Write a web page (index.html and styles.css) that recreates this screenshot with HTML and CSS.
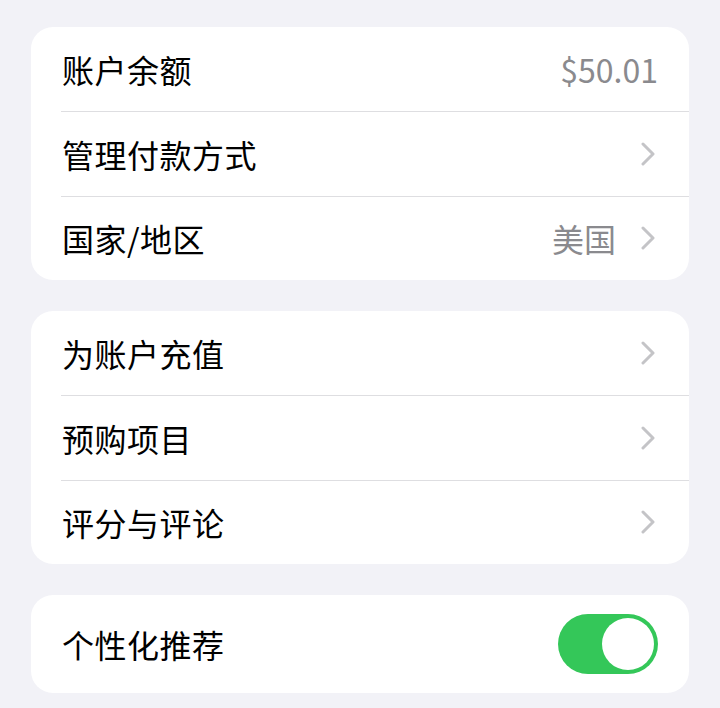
FILE: index.html
```html
<!DOCTYPE html>
<html lang="zh-CN">
<head>
  <meta charset="UTF-8" />
  <meta name="viewport" content="width=device-width, initial-scale=1.0"/>
  <title>账户</title>
  <link rel="stylesheet" href="styles.css">
</head>
<body>
  <div class="group">
    <div class="row">
      <div class="row-body">
        <span class="label">账户余额</span>
        <span class="value">$50.01</span>
      </div>
    </div>
    <div class="row">
      <div class="row-body">
        <span class="label">管理付款方式</span>
        <svg class="chevron" viewBox="0 0 14 24"><path d="M2 2l10 10-10 10"/></svg>
      </div>
    </div>
    <div class="row">
      <div class="row-body">
        <span class="label">国家/地区</span>
        <span class="right">
          <span class="value">美国</span>
          <svg class="chevron" viewBox="0 0 14 24"><path d="M2 2l10 10-10 10"/></svg>
        </span>
      </div>
    </div>
  </div>

  <div class="group">
    <div class="row">
      <div class="row-body">
        <span class="label">为账户充值</span>
        <svg class="chevron" viewBox="0 0 14 24"><path d="M2 2l10 10-10 10"/></svg>
      </div>
    </div>
    <div class="row">
      <div class="row-body">
        <span class="label">预购项目</span>
        <svg class="chevron" viewBox="0 0 14 24"><path d="M2 2l10 10-10 10"/></svg>
      </div>
    </div>
    <div class="row">
      <div class="row-body">
        <span class="label">评分与评论</span>
        <svg class="chevron" viewBox="0 0 14 24"><path d="M2 2l10 10-10 10"/></svg>
      </div>
    </div>
  </div>

  <div class="group">
    <div class="row">
      <div class="row-body tall">
        <span class="label">个性化推荐</span>
        <span class="toggle on"><span class="knob"></span></span>
      </div>
    </div>
  </div>
</body>
</html>
```

FILE: styles.css
```css
body { margin: 0; padding: 27px 31px 0; background: #f2f2f7; font-family: "Noto Sans CJK SC", "Liberation Sans", sans-serif; color: #000; }
.group { background: #fff; border-radius: 22px; margin-bottom: 31px; overflow: hidden; }
.row { padding-left: 30px; }
.row-body { box-sizing: border-box; height: 84px; display: flex; align-items: center; justify-content: space-between; padding-right: 31px; }
.row + .row .row-body { border-top: 1px solid #dedee1; height: 84.5px; }
.row-body.tall { height: 98px; }
.label { font-size: 32px; padding-left: 1px; letter-spacing: 0.5px; }
.value { font-size: 32px; color: #8a8a8e; }
.right { display: flex; align-items: center; gap: 25px; }
.chevron { width: 14px; height: 24px; margin-right: 3px; fill: none; stroke: #c4c4c7; stroke-width: 3; stroke-linecap: round; stroke-linejoin: round; }
.toggle { width: 100px; height: 60px; border-radius: 30px; background: #e9e9eb; position: relative; }
.toggle.on { background: #34c759; }
.knob { position: absolute; top: 4px; right: 4px; width: 52px; height: 52px; border-radius: 50%; background: #fff; }
```
